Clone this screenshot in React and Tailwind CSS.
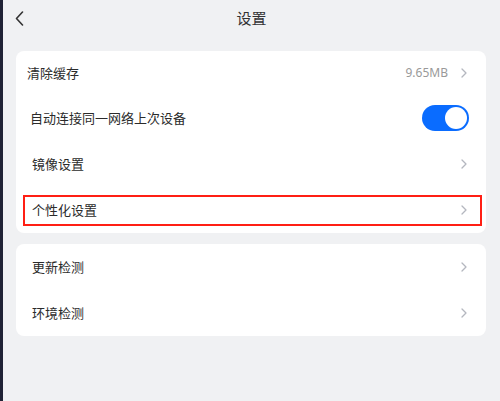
import React, { useState } from "react";

const Chevron = () => (
  <svg width="6" height="10" viewBox="0 0 6 10" fill="none">
    <path d="M1 1l4 4-4 4" stroke="#b4b7bf" strokeWidth="1.3" strokeLinecap="round" strokeLinejoin="round" />
  </svg>
);

const Toggle = ({ on, onClick }) => (
  <button
    onClick={onClick}
    className={`w-[47px] h-[26px] rounded-full p-[2px] flex items-center ${on ? "bg-[#0a6cff] justify-end" : "bg-[#d5d7dc] justify-start"}`}
  >
    <span className="w-[22px] h-[22px] rounded-full bg-white block" />
  </button>
);

const Row = ({ label, right, h = "h-[46px]" }) => (
  <div className={`${h} flex items-center justify-between pl-[16px] pr-[19px]`}>
    <span>{label}</span>
    {right}
  </div>
);

export default function App() {
  const [autoConnect, setAutoConnect] = useState(true);

  return (
    <div
      className="w-[500px] h-[401px] bg-[#f0f1f3] border-l-[3px] border-[#1f2235] text-[13px] text-[#2b2b2b] overflow-hidden"
      style={{ fontFamily: '"Noto Sans CJK SC", "Noto Sans", sans-serif' }}
    >
      {/* header */}
      <div className="h-[36px] relative flex items-center justify-center">
        <button className="absolute left-[12px] top-[11px]">
          <svg width="9" height="15" viewBox="0 0 9 15" fill="none">
            <path d="M7.5 1L1.5 7.5l6 6.5" stroke="#333" strokeWidth="1.6" strokeLinecap="round" strokeLinejoin="round" />
          </svg>
        </button>
        <span className="text-[15px] text-[#333]">设置</span>
      </div>

      <div className="pl-[13px] pr-[14px] mt-[15px] flex flex-col gap-[11px]">
        <div className="bg-white rounded-[8px] flex flex-col">
          <div className="h-[44px] flex items-center justify-between pl-[11px] pr-[19px]">
            <span>清除缓存</span>
            <div className="flex items-center gap-[13px] text-[#999]">
              <span className="text-[12px]" style={{ fontFamily: '"Noto Sans", sans-serif' }}>9.65MB</span>
              <Chevron />
            </div>
          </div>
          <div className="h-[46px] flex items-center justify-between pl-[14px] pr-[17px]">
            <span>自动连接同一网络上次设备</span>
            <Toggle on={autoConnect} onClick={() => setAutoConnect(!autoConnect)} />
          </div>
          <Row label="镜像设置" right={<Chevron />} />
          <div className="h-[46px] flex items-center">
            <div className="flex-1 ml-[7px] mr-[4px] h-[31px] border-[2.5px] border-[#ff1f14] flex items-center justify-between pl-[7px] pr-[13px]">
              <span>个性化设置</span>
              <Chevron />
            </div>
          </div>
        </div>

        <div className="bg-white rounded-[8px] flex flex-col">
          <Row label="更新检测" right={<Chevron />} />
          <Row label="环境检测" right={<Chevron />} />
        </div>
      </div>
    </div>
  );
}
